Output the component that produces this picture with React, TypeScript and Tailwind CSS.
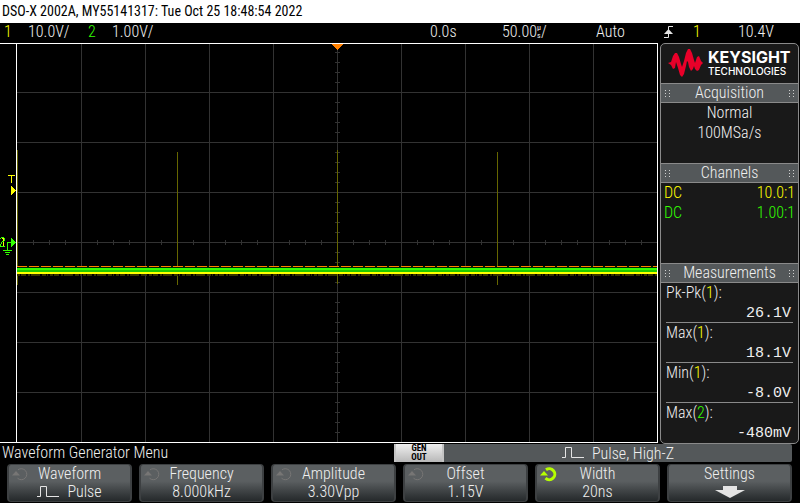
import type { ReactNode } from 'react';

const columns = [81, 145, 209, 273, 337, 401, 465, 529, 593];
const rows = [92, 142, 192, 242, 292, 342, 392];
const xTicks = Array.from({ length: 39 }, (_, i) => 33 + i * 16);
const yTicks = Array.from({ length: 39 }, (_, i) => 52 + i * 10);

function PulseIcon() {
  return (
    <svg width="22" height="12" viewBox="0 0 22 12" fill="none" stroke="#e4e4e4" aria-hidden="true">
      <path d="M0 10.5H3.5V.5H9.5V10.5H22" />
    </svg>
  );
}

function KnobIcon({ active }: { active?: boolean }) {
  const color = active ? '#b6ff00' : '#777675';
  return (
    <svg width="18" height="15" viewBox="0 0 18 15" className="absolute top-[2px] left-[2px]" fill="none" aria-hidden="true">
      <path d="M7 2.8A5.5 5.5 0 1 1 6.5 11.2" stroke={color} strokeWidth={active ? 3 : 1} />
      <path d="M1 8.5L5 4L9 8.5Z" fill={color} />
    </svg>
  );
}

function Grip() {
  return (
    <svg width="5" height="7" viewBox="0 0 5 7" fill="#d0d0d0" aria-hidden="true">
      {[0, 3, 6].map((y) => (
        <g key={y}>
          <rect x="0" y={y} width="1" height="1" />
          <rect x="4" y={y} width="1" height="1" />
        </g>
      ))}
    </svg>
  );
}

function PanelTitle({ children }: { children: ReactNode }) {
  return (
    <h2 className="flex h-5 items-center justify-between border-y border-[#8a8a8a] bg-[#54585a] px-1 leading-[18px]">
      <Grip />
      <span>{children}</span>
      <Grip />
    </h2>
  );
}

function Measurement({ name, channel, value }: { name: string; channel: number; value: string }) {
  return (
    <div className="mx-[5px] h-10 border-b border-[#8a8a8a] last:border-0">
      <dt className="h-5 leading-5">
        {name}(<span className={channel === 1 ? 'text-[#ffff00]' : 'text-[#33ff00]'}>{channel}</span>):
      </dt>
      <dd className="h-5 pr-[2px] text-right font-['Liberation_Mono',monospace] text-[15px] leading-[22px]">{value}</dd>
    </div>
  );
}

function SoftKey({ label, active, children }: { label: string; active?: boolean; children: ReactNode }) {
  return (
    <button
      type="button"
      className="relative flex h-[38px] flex-1 flex-col items-center rounded-[4px] border-x-2 border-y border-[#3d4042] bg-linear-to-b from-[#5b5f61] from-45% to-[#25292b] leading-[18px]"
    >
      {label !== 'Settings' && <KnobIcon active={active} />}
      <span>{label}</span>
      <span className="flex h-[18px] items-center gap-2">{children}</span>
    </button>
  );
}

function Gutter() {
  return (
    <svg viewBox="0 44 16 398" className="h-full w-4 shrink-0" shapeRendering="crispEdges" aria-label="Level markers">
      <path d="M8 175.5H15M11.5 175V183" stroke="#ffff00" />
      <path d="M11 186L16 190.5L11 195Z" fill="#ffff00" />
      <path d="M11 238L16 242.5L11 247Z" fill="#33ff00" />
      <path d="M11 242.5H7.5V250M3 250.5H12M5 252.5H10M6 254.5H9" stroke="#33ff00" fill="none" />
      <path d="M2 238.5H3.5V246" stroke="#ffff00" fill="none" />
      <path d="M0 238.5H1M1 237.5H4M4.5 238V241M2 241.5H4M1.5 242V244M0 246.5H5M.5 244V246" stroke="#33ff00" fill="none" />
    </svg>
  );
}

function Plot() {
  return (
    <svg
      viewBox="17 44 640 398"
      preserveAspectRatio="none"
      className="h-full w-full"
      shapeRendering="crispEdges"
      role="img"
      aria-label="Oscilloscope trace"
    >
      <g fill="#323232">
        {columns.map((x) => <rect key={x} x={x} y="44" width="1" height="398" />)}
        {rows.map((y) => <rect key={y} x="17" y={y} width="640" height="1" />)}
        {xTicks.map((x) => <rect key={x} x={x} y="240" width="1" height="5" />)}
        {yTicks.map((y) => <rect key={y} x="335" y={y} width="5" height="1" />)}
      </g>
      <g fill="#666600">
        <rect x="17" y="150" width="1" height="135" />
        <rect x="177" y="152" width="1" height="133" />
        <rect x="337" y="150" width="1" height="134" />
        <rect x="497" y="152" width="1" height="133" />
      </g>
      <path d="M17 275H657" stroke="#333300" strokeDasharray="3 1 5 2 2 1 9 2 4 1 1 2" strokeWidth="2" />
      <rect x="17" y="266" width="640" height="2" fill="#002800" />
      <path d="M17 266.5H657" stroke="#ff8000" strokeDasharray="10 2" />
      <rect x="17" y="268" width="640" height="2" fill="#33ff00" />
      <rect x="17" y="270" width="640" height="2" fill="#20c800" />
      <rect x="17" y="272" width="640" height="2" fill="#ffff00" />
      <path d="M331 44H343L337.5 50Z" fill="#ff8000" />
    </svg>
  );
}

export default function App() {
  return (
    <main className="min-h-[503px] overflow-hidden bg-black font-['Roboto_Condensed','Liberation_Sans_Narrow','Liberation_Sans',sans-serif] text-[16px] font-light text-[#f0f0f0]">
      <h1 className="h-[23px] bg-white pl-[2px] text-[14px] leading-[23px] font-normal whitespace-nowrap text-black">
        DSO-X 2002A, MY55141317: Tue Oct 25 18:48:54 2022
      </h1>

      <header className="flex h-5 items-start justify-between pl-1 leading-[18px]">
        <div className="flex">
          <span className="w-6 text-[#ffff00]">1</span>
          <span className="w-[60px]">10.0V/</span>
          <span className="w-6 text-[#33ff00]">2</span>
          <span>1.00V/</span>
        </div>
        <div className="flex">
          <span className="w-[72px]">0.0s</span>
          <span className="flex w-[94px] items-center">
            50.00
            <span className="flex flex-col text-[8px] leading-[8px] font-normal">
              <span>µ</span>
              <span>s</span>
            </span>
            /
          </span>
          <span className="w-[68px]">Auto</span>
          <svg width="9" height="12" viewBox="0 0 9 12" className="mt-[3px] mr-5" aria-label="Rising edge">
            <path d="M0 11.5H4.5V.5H9" fill="none" stroke="#e4e4e4" />
            <path d="M0 8L4.5 3L9 8Z" fill="#e4e4e4" />
          </svg>
          <span className="w-[45px] text-[#ffff00]">1</span>
          <span className="w-[62px]">10.4V</span>
        </div>
      </header>

      <div className="flex gap-[2px] pr-px">
        <section className="flex h-[400px] min-w-0 flex-1 border-y border-white">
          <Gutter />
          <div className="min-w-0 flex-1 border-x border-white">
            <Plot />
          </div>
        </section>

        <aside className="h-[401px] w-[139px] overflow-hidden rounded-[5px] border border-[#8a8a8a] bg-[#191919]">
          <div className="flex h-[39px] items-center gap-[5px] pb-[2px] pl-[7px]">
            <svg width="35" height="28" viewBox="0 0 35 28" aria-hidden="true">
              <path
                d="M0 14L3 13L5 7L7 4L9 4L11 8L13 15L14 18L16 12L18 4L20 0L22 0L24 4L26 11L27 14L29 8L31 7L33 12L35 14L33 16L31 21L29 22L27 20L26 17L25 20L23 22L21 18L20 13L19 12L18 17L16 25L14 28L12 26L10 19L8 13L7 19L5 20L3 16Z"
                fill="#e90029"
              />
            </svg>
            <div className="font-['Inter',sans-serif] text-white">
              <div className="text-[16px] leading-4 font-bold">KEYSIGHT</div>
              <div className="text-[10px] leading-3 font-medium">TECHNOLOGIES</div>
            </div>
          </div>
          <PanelTitle>Acquisition</PanelTitle>
          <div className="h-[60px] text-center leading-5">
            <p>Normal</p>
            <p>100MSa/s</p>
          </div>
          <PanelTitle>Channels</PanelTitle>
          <dl className="grid h-20 grid-cols-2 content-start px-[3px] leading-5">
            <dt className="text-[#ffff00]">DC</dt>
            <dd className="text-right text-[#ffff00]">10.0:1</dd>
            <dt className="text-[#33ff00]">DC</dt>
            <dd className="text-right text-[#33ff00]">1.00:1</dd>
          </dl>
          <PanelTitle>Measurements</PanelTitle>
          <dl>
            <Measurement name="Pk-Pk" channel={1} value="26.1V" />
            <Measurement name="Max" channel={1} value="18.1V" />
            <Measurement name="Min" channel={1} value="-8.0V" />
            <Measurement name="Max" channel={2} value="-480mV" />
          </dl>
        </aside>
      </div>

      <div className="flex h-[18px] pr-2 pl-[2px] leading-[17px]">
        <h2 className="w-[392px]">Waveform Generator Menu</h2>
        <div className="flex w-[50px] flex-col items-center justify-center border-x-2 border-[#c4c4c4] bg-linear-to-b from-[#f0f0f0] to-[#b8b8b8] text-[9px] leading-[9px] font-bold text-black">
          <span>GEN</span>
          <span>OUT</span>
        </div>
        <div className="flex flex-1 items-center justify-center gap-2 rounded-r-[2px] bg-[#54585a]">
          <PulseIcon />
          <span>Pulse, High-Z</span>
        </div>
      </div>

      <nav className="flex gap-[7px] pt-[2px] pr-2 pl-[7px]" aria-label="Soft keys">
        <SoftKey label="Waveform">
          <PulseIcon />
          Pulse
        </SoftKey>
        <SoftKey label="Frequency">8.000kHz</SoftKey>
        <SoftKey label="Amplitude">3.30Vpp</SoftKey>
        <SoftKey label="Offset">1.15V</SoftKey>
        <SoftKey label="Width" active>20ns</SoftKey>
        <SoftKey label="Settings">
          <svg width="30" height="12" viewBox="0 0 30 12" fill="#e4e4e4" aria-hidden="true">
            <path d="M8 0H22V4H30L15 12L0 4H8Z" />
          </svg>
        </SoftKey>
      </nav>
    </main>
  );
}
